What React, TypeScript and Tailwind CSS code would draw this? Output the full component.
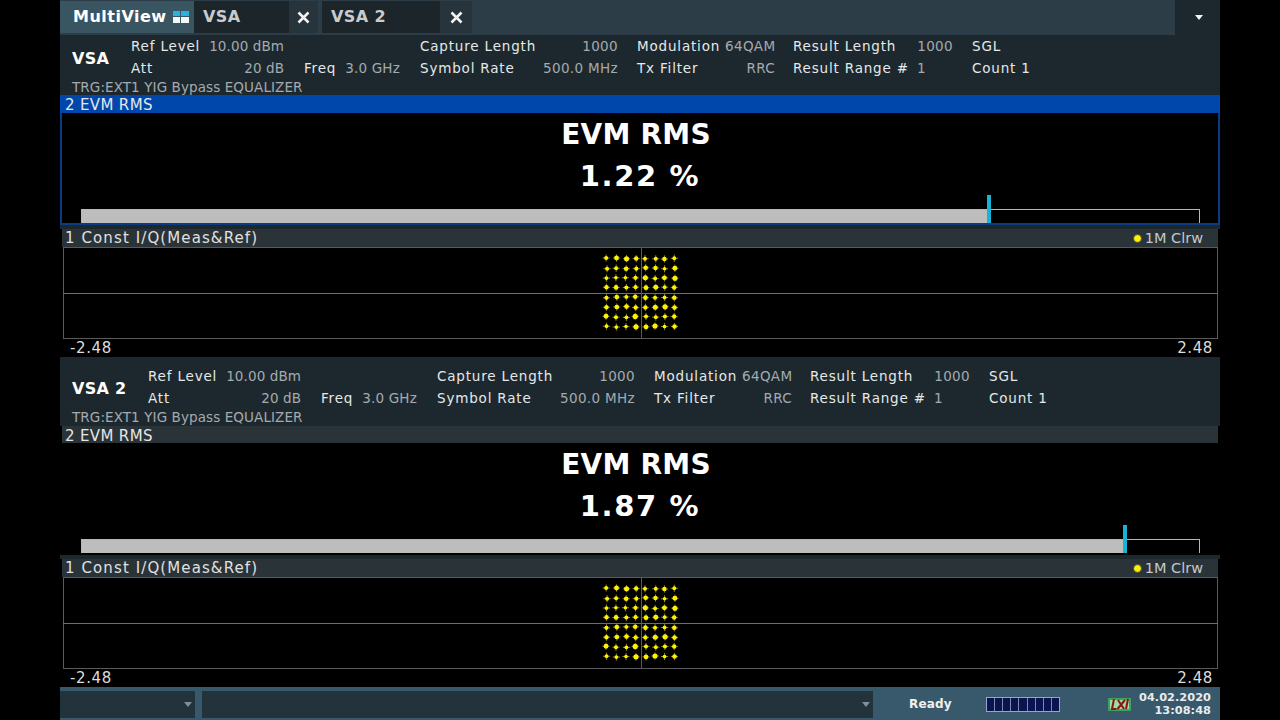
const xs = [0, 1, 2, 3, 4, 5, 6, 7];

function jitter(i: number, j: number, k: number) {
  const v = Math.sin(i * 12.9898 + j * 78.233 + k * 37.719) * 43758.5453;
  return v - Math.floor(v) - 0.5;
}

function Constellation() {
  return (
    <svg viewBox="0 0 1155 92" className="block w-[1155px] h-[92px] ml-[3px]" style={{ width: 1155, height: 92 }}>
      <rect x="0.5" y="0.5" width="1154" height="91" fill="#000" stroke="#5a5a5a" />
      <line x1="0" x2="1155" y1="46.5" y2="46.5" stroke="#6e6e6e" />
      <line x1="578.5" x2="578.5" y1="0" y2="92" stroke="#5a5a5a" />
      {xs.map((i) =>
        xs.map((j) => {
          const cx = 543.5 + i * 9.75 + jitter(i, j, 1) * 1.2;
          const cy = 11.5 + j * 9.72 + jitter(i, j, 2) * 1.2;
          const r = 2.2 + jitter(i, j, 3) * 0.8;
          return (
            <g key={`${i}-${j}`}>
              <line x1={cx - 3.6} x2={cx + 3.6} y1={cy} y2={cy} stroke="#8a8a10" strokeWidth="1" />
              <line x1={cx} x2={cx} y1={cy - 3.6} y2={cy + 3.6} stroke="#8a8a10" strokeWidth="1" />
              <circle cx={cx} cy={cy} r={r} fill="#fff200" />
            </g>
          );
        })
      )}
    </svg>
  );
}

function Caret({ color = "#9fb0b8" }: { color?: string }) {
  return (
    <svg width="8" height="5" viewBox="0 0 8 5" className="block">
      <path d="M0 0H8L4 5Z" fill={color} />
    </svg>
  );
}

function Label({ children, w }: { children: React.ReactNode; w: string }) {
  return <div className={`${w} shrink-0 whitespace-nowrap text-[#e4e8ea] tracking-[0.82px]`}>{children}</div>;
}

function Value({ children, w }: { children: React.ReactNode; w: string }) {
  return <div className={`${w} shrink-0 whitespace-nowrap text-right text-[#a4abaf] tracking-[0.35px]`}>{children}</div>;
}

function Header({ name, nameClass, topClass }: { name: string; nameClass: string; topClass: string }) {
  return (
    <div className={`bg-[#1d282e] ${topClass} font-['DejaVu_Sans',sans-serif]`}>
      <div className="flex items-center pl-3">
        <div className={`${nameClass} shrink-0 h-[44px] text-[16px] leading-[48px] font-bold text-white tracking-[0.3px]`}>{name}</div>
        <div className="flex flex-col text-[13.5px] leading-[22px]">
          <div className="flex h-[22px]">
            <Label w="w-[78px]">Ref Level</Label>
            <div className="w-[75px] shrink-0 text-right whitespace-nowrap text-[#a4abaf] tracking-[0.1px]">10.00 dBm</div>
            <div className="w-[136px] shrink-0" />
            <Label w="w-[140px]">Capture Length</Label>
            <Value w="w-[58px]">1000</Value>
            <div className="w-[19px] shrink-0" />
            <Label w="w-[88px]">Modulation</Label>
            <Value w="w-[50px]">64QAM</Value>
            <div className="w-[18px] shrink-0" />
            <Label w="w-[120px]">Result Length</Label>
            <Value w="w-[40px]">1000</Value>
            <div className="w-[19px] shrink-0" />
            <Label w="w-[70px]">SGL</Label>
          </div>
          <div className="flex h-[22px]">
            <Label w="w-[78px]">Att</Label>
            <div className="w-[75px] shrink-0 text-right whitespace-nowrap text-[#a4abaf] tracking-[0.1px]">20 dB</div>
            <div className="w-[20px] shrink-0" />
            <Label w="w-[41px]">Freq</Label>
            <div className="w-[55px] shrink-0 text-right whitespace-nowrap text-[#a4abaf] tracking-[0.2px]">3.0 GHz</div>
            <div className="w-[20px] shrink-0" />
            <Label w="w-[100px]">Symbol Rate</Label>
            <Value w="w-[98px]">500.0 MHz</Value>
            <div className="w-[19px] shrink-0" />
            <Label w="w-[88px]">Tx Filter</Label>
            <Value w="w-[50px]">RRC</Value>
            <div className="w-[18px] shrink-0" />
            <Label w="w-[124px]">Result Range #</Label>
            <div className="w-[55px] shrink-0 text-[#a4abaf]">1</div>
            <Label w="w-[70px]">Count 1</Label>
          </div>
        </div>
      </div>
      <div className="pl-3 h-[16px] text-[13.5px] leading-[16px] text-[#a4abaf] whitespace-nowrap tracking-[0.1px]">TRG:EXT1 YIG Bypass EQUALIZER</div>
    </div>
  );
}

function Evm({ value, pct, active }: { value: string; pct: number; active?: boolean }) {
  return (
    <div className="font-['DejaVu_Sans',sans-serif]">
      <div className={`text-[15px] tracking-[0.35px] text-[#e6e6e6] ${active ? "h-[18px] leading-[20px] bg-[#0047ab] pl-[5px]" : "h-[17px] leading-[20px] bg-[#2a3338] mx-[2px] pl-[3px]"}`}>2 EVM RMS</div>
      <div className={`h-[112px] flex flex-col bg-black ${active ? "border-x-2 border-b-2 border-[#0b3c83] pt-[2px]" : "pt-[2px] pb-[2px]"}`}>
        <div className="text-center font-bold text-white text-[28px] leading-[40px] tracking-[0.25px] pr-[8px]">EVM RMS</div>
        <div className="text-center font-bold text-white text-[29px] leading-[40px] tracking-[1.6px] mt-[1px]">{value}</div>
        <div className={`relative mt-auto h-[14px] border border-b-0 border-[#b8b8b8] ${active ? "ml-[19px] mr-[18px]" : "ml-[21px] mr-[20px]"}`}>
          <div className="h-full bg-[#bdbdbd]" style={{ width: `${pct}px` }} />
          <div className="absolute bottom-0 w-[4px] h-[28px] bg-[#18b4d8]" style={{ left: `${pct - 2}px` }} />
        </div>
      </div>
    </div>
  );
}

function ConstPanel() {
  return (
    <div className="font-['DejaVu_Sans',sans-serif] bg-black">
      <div className="h-[4px] bg-[#1d282e]" />
      <div className="h-[18px] mx-[2px] flex items-center justify-between pl-[3px] pr-[15px] bg-[#2a3338] text-[15px] text-[#e0e0e0] leading-[18px]">
        <div className="tracking-[1.1px]">1 Const I/Q(Meas&amp;Ref)</div>
        <div className="flex items-center gap-[3px] text-[14.5px] text-[#c4c8ca]">
          <span className="block w-[9px] h-[9px] rounded-full bg-[#fff200] border border-[#444]" />
          <span>1M Clrw</span>
        </div>
      </div>
      <Constellation />
      <div className="h-[18px] flex justify-between pl-[10px] pr-[7px] text-[15px] leading-[18px] text-[#dddddd] tracking-[0.6px]">
        <span>-2.48</span>
        <span>2.48</span>
      </div>
    </div>
  );
}

function CloseButton({ w }: { w: string }) {
  return (
    <div className={`${w} h-full flex items-center justify-center bg-[#27343b]`}>
      <svg width="13" height="13" viewBox="0 0 13 13">
        <path d="M1.5 1.5L11.5 11.5M11.5 1.5L1.5 11.5" stroke="#f2f2f2" strokeWidth="2.6" />
      </svg>
    </div>
  );
}

function Tabs() {
  return (
    <div className="flex h-[35px] bg-[#1d282e] font-['DejaVu_Sans',sans-serif]">
      <div className="flex-1 flex bg-[#2c3d47] pt-[1px] pb-[2px]">
        <div className="w-[134px] flex items-center pl-[13px] bg-[#3a5562]">
          <span className="text-[16px] font-bold text-white tracking-[0.5px]">MultiView</span>
          <svg width="16" height="12" viewBox="0 0 16 12" className="ml-[6px]">
            <rect x="0" y="0" width="7" height="5" fill="#27b2e0" />
            <rect x="8" y="0" width="8" height="5" fill="#27b2e0" />
            <rect x="0" y="6" width="7" height="6" fill="#f2f6f8" />
            <rect x="8" y="6" width="8" height="6" fill="#f2f6f8" />
          </svg>
        </div>
        <div className="w-[95px] flex items-center pl-[9px] bg-[#1b252a] text-[16px] font-bold text-[#c8cccf] tracking-[0.4px]">VSA</div>
        <CloseButton w="w-[29px]" />
        <div className="w-[4px]" />
        <div className="w-[118px] flex items-center pl-[9px] bg-[#1b252a] text-[16px] font-bold text-[#c8cccf] tracking-[0.4px]">VSA 2</div>
        <CloseButton w="w-[32px]" />
      </div>
      <div className="w-[45px] flex items-center justify-center pl-[2px]">
        <Caret color="#f4f4f4" />
      </div>
    </div>
  );
}

function Footer() {
  return (
    <div className="h-[33px] pt-[1px] flex items-center bg-[#38596b] font-['DejaVu_Sans',sans-serif]">
      <div className="w-[135px] h-[27px] flex items-center justify-end pr-[2px] bg-[#22333b]">
        <div className="pr-[1px]"><Caret color="#7f9098" /></div>
      </div>
      <div className="w-[7px]" />
      <div className="w-[671px] h-[27px] flex items-center justify-end pr-[3px] bg-[#22333b]">
        <Caret color="#7f9098" />
      </div>
      <div className="w-[36px]" />
      <div className="w-[77px] text-[12px] font-bold text-[#f0f0f0] tracking-[0.2px]">Ready</div>
      <div className="w-[74px] h-[15px] flex border border-[#9aa4c4] bg-[#8088aa] gap-[1px]">
        {[0, 1, 2, 3, 4, 5, 6, 7, 8].map((i) => (
          <div key={i} className="flex-1 bg-[#0a1450]" />
        ))}
      </div>
      <div className="w-[48px]" />
      <svg width="23" height="15" viewBox="0 0 23 15">
        <rect x="0" y="1" width="23" height="13" rx="1" fill="#3fa35a" />
        <rect x="2" y="3" width="19" height="9" fill="#9ed9a8" />
        <path d="M6 2L4 12H8.5M10 3L16 12M17 3L9.5 12M20 2L18 12" fill="none" stroke="#8a1414" strokeWidth="2" />
      </svg>
      <div className="flex-1 flex flex-col items-end pr-[9px] text-[11.3px] leading-[13px] font-bold text-[#e8ecee] tracking-[0.05px]">
        <div>04.02.2020</div>
        <div>13:08:48</div>
      </div>
    </div>
  );
}

export default function App() {
  return (
    <div className="w-[1280px] h-[720px] bg-black overflow-hidden px-[60px]">
      <div className="w-[1160px] h-full flex flex-col">
        <Tabs />
        <Header name="VSA" nameClass="w-[59px]" topClass="h-[60px]" />
        <Evm value="1.22 %" pct={907} active />
        <ConstPanel />
        <Header name="VSA 2" nameClass="w-[76px]" topClass="h-[69px] pt-[8px]" />
        <Evm value="1.87 %" pct={1043} />
        <ConstPanel />
        <Footer />
      </div>
    </div>
  );
}
